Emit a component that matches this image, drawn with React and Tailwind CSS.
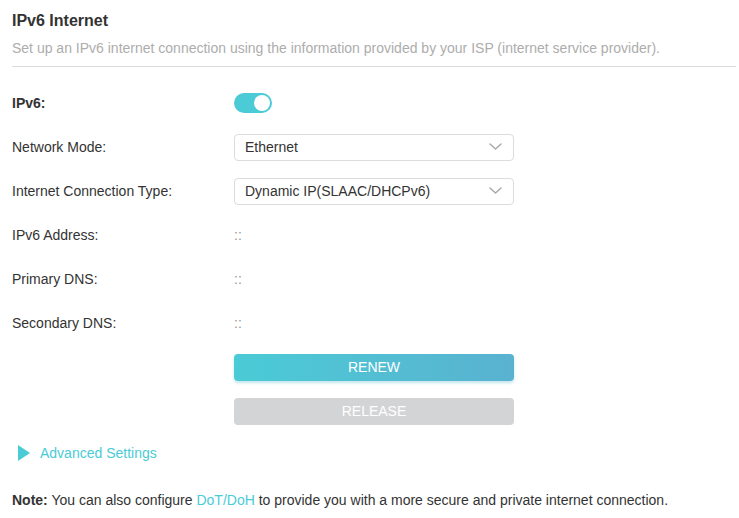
import React from "react";

function Chevron() {
  return (
    <svg width="13" height="8" viewBox="0 0 13 8" fill="none" className="shrink-0">
      <path d="M1 1l5.5 5L12 1" stroke="#a9a9a9" strokeWidth="1.5" strokeLinecap="round" strokeLinejoin="round" />
    </svg>
  );
}

function Row({ label, bold, children }) {
  return (
    <div className="flex items-center h-[28px]">
      <div className={`w-[222px] shrink-0 text-[14px] text-[#333] ${bold ? "font-bold" : ""}`}>{label}</div>
      <div className="flex items-center">{children}</div>
    </div>
  );
}

function Select({ value }) {
  return (
    <div className="w-[280px] h-[27px] border border-[#dcdcdc] rounded-[4px] flex items-center justify-between pl-[10px] pr-[11px] text-[14px] text-[#333] bg-white">
      <span>{value}</span>
      <Chevron />
    </div>
  );
}

export default function App() {
  return (
    <div className="w-[739px] h-[518px] bg-white overflow-hidden" style={{ fontFamily: '"Liberation Sans", Arial, sans-serif' }}>
      <div className="pl-[12px] pr-[3px]">
        <div className="pt-[11px] text-[16px] font-bold text-[#333] leading-[19px]">IPv6 Internet</div>
        <div className="mt-[10px] text-[14px] text-[#adadad] leading-[17px]">
          Set up an IPv6 internet connection using the information provided by your ISP (internet service provider).
        </div>
        <div className="mt-[9px] h-px bg-[#dcdcdc]" />
        <div className="mt-[22px] flex flex-col gap-[16px]">
          <Row label="IPv6:" bold>
            <div className="w-[38px] h-[20px] rounded-full bg-[#4acbd6] flex items-center justify-end pr-[2px]">
              <div className="w-[16px] h-[16px] rounded-full bg-white" />
            </div>
          </Row>
          <Row label="Network Mode:">
            <Select value="Ethernet" />
          </Row>
          <Row label="Internet Connection Type:">
            <Select value="Dynamic IP(SLAAC/DHCPv6)" />
          </Row>
          <Row label="IPv6 Address:">
            <span className="text-[14px] text-[#999]">::</span>
          </Row>
          <Row label="Primary DNS:">
            <span className="text-[14px] text-[#999]">::</span>
          </Row>
          <Row label="Secondary DNS:">
            <span className="text-[14px] text-[#999]">::</span>
          </Row>
          <Row label="">
            <div className="w-[280px] h-[27px] rounded-[4px] bg-gradient-to-r from-[#4acbd6] to-[#59b2d0] text-white text-[14px] flex items-center justify-center shadow-[0_2px_3px_rgba(80,180,200,0.35)]">
              RENEW
            </div>
          </Row>
          <Row label="">
            <div className="w-[280px] h-[27px] rounded-[4px] bg-[#d3d4d6] text-white text-[14px] flex items-center justify-center">
              RELEASE
            </div>
          </Row>
        </div>
        <div className="mt-[14px] flex items-center h-[28px] pl-[6px]">
          <svg width="12" height="16" viewBox="0 0 12 16" className="shrink-0">
            <path d="M0 0L12 8L0 16Z" fill="#4acbd6" />
          </svg>
          <span className="ml-[10px] text-[14px] text-[#4acbd6]">Advanced Settings</span>
        </div>
        <div className="mt-[25px] text-[14px] text-[#333] leading-[17px]">
          <span className="font-bold">Note:</span> You can also configure <span className="text-[#4acbd6]">DoT/DoH</span> to provide you with a more secure and private internet connection.
        </div>
      </div>
    </div>
  );
}
